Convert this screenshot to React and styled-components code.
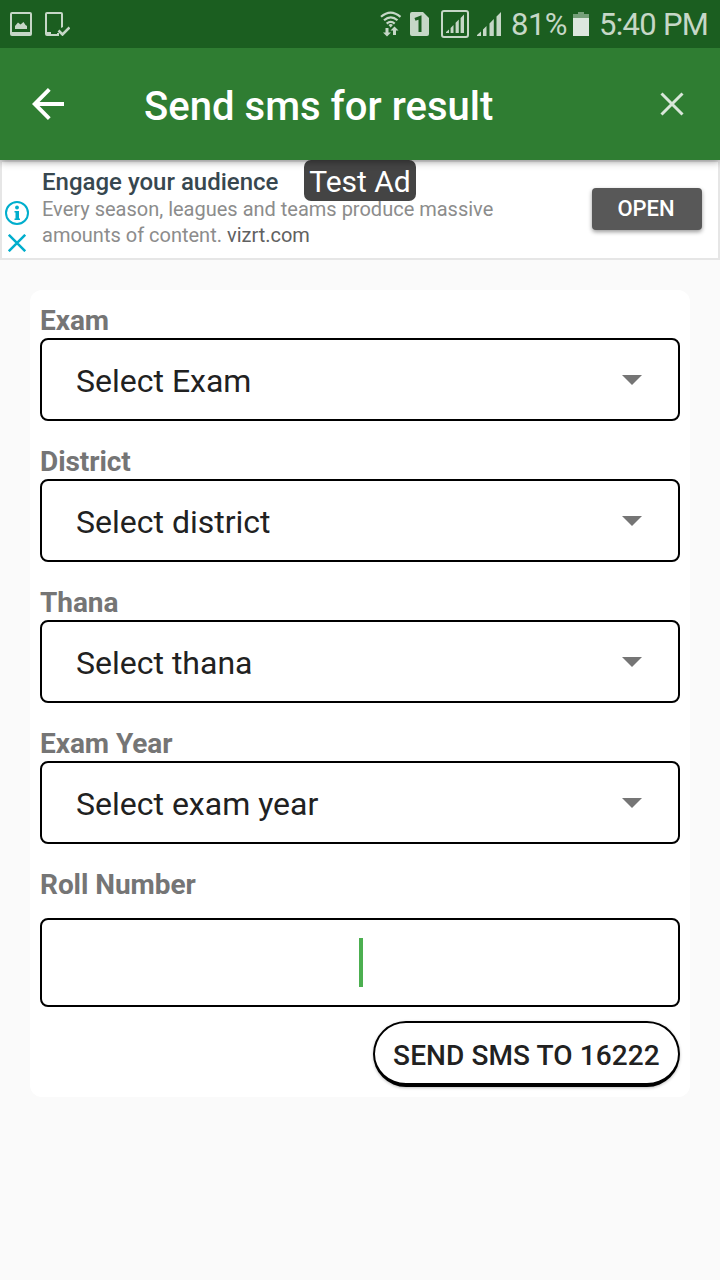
import React from 'react';
import styled, { createGlobalStyle } from 'styled-components';

const GlobalStyle = createGlobalStyle`
  *, *::before, *::after { box-sizing: border-box; }
  body { margin: 0; background: #fafafa; font-family: Roboto, sans-serif; }
  svg { display: block; flex: none; }
  button { font-family: inherit; }
`;

const Screen = styled.div`
  width: 720px;
  height: 1280px;
  overflow: hidden;
  background: #fafafa;
`;

const StatusBar = styled.header`
  position: relative;
  z-index: 2;
  display: flex;
  justify-content: space-between;
  height: 48px;
  padding: 0 10px 0 9px;
  background: #1b5e20;
  color: #c6d7c7;
`;

const StatusGroup = styled.div`
  display: flex;
  align-items: center;
`;

const StatusText = styled.span`
  width: ${({ $width }) => $width}px;
  padding-top: 2px;
  font-size: 31px;
  line-height: 46px;
  letter-spacing: ${({ $spacing }) => $spacing || 0}px;
  white-space: nowrap;
`;

const Toolbar = styled.div`
  position: relative;
  z-index: 1;
  display: flex;
  align-items: center;
  height: 112px;
  padding: 0 32px;
  background: #2f7d32;
  box-shadow: 0 1px 8px rgba(0, 0, 0, 0.45);
  color: #fff;
`;

const Title = styled.h1`
  flex: 1;
  margin: 0 0 0 80px;
  padding-top: 6px;
  font-size: 40px;
  font-weight: 500;
  line-height: 48px;
  letter-spacing: 0.03px;
`;

const IconButton = styled.button`
  display: flex;
  justify-content: center;
  width: 32px;
  padding: 0;
  border: 0;
  background: none;
  color: inherit;
`;

const AdBanner = styled.section`
  position: relative;
  display: flex;
  height: 100px;
  border: 2px solid #e6e6e6;
  background: #fff;
`;

const AdControls = styled.div`
  display: flex;
  flex-direction: column;
  align-items: center;
  gap: 9px;
  width: 40px;
  padding: 39px 10px 0 0;
`;

const AdCopy = styled.div`
  flex: 1;
  padding-top: 6px;
`;

const AdTitle = styled.div`
  color: #37474f;
  font-size: 24px;
  font-weight: 500;
  line-height: 28px;
`;

const AdText = styled.p`
  width: 500px;
  margin: 0;
  color: #8c8c8c;
  font-size: 20px;
  line-height: 26px;
`;

const AdLink = styled.span`
  color: #616161;
`;

const AdAction = styled.button`
  width: 110px;
  height: 42px;
  margin: 26px 16px 0 0;
  padding: 0 2px 2px 0;
  border: 0;
  border-radius: 4px;
  background: #585858;
  box-shadow: 0 2px 4px rgba(0, 0, 0, 0.4);
  color: #fff;
  font-size: 22px;
  font-weight: 500;
`;

const AdBadge = styled.span`
  position: absolute;
  top: -2px;
  left: 302px;
  width: 112px;
  height: 41px;
  border-radius: 7px;
  background: #444;
  color: #fff;
  font-size: 30px;
  line-height: 44px;
  text-align: center;
`;

const FormCard = styled.form`
  display: flex;
  flex-direction: column;
  margin: 30px 30px 0;
  padding: 10px;
  border-radius: 12px;
  background: #fff;
`;

const Field = styled.div`
  margin-bottom: ${({ $gap }) => $gap}px;
`;

const Label = styled.div`
  height: 38px;
  margin-bottom: ${({ $gap }) => $gap || 0}px;
  padding-top: 2px;
  color: #757575;
  font-size: 28px;
  font-weight: 700;
  line-height: 38px;
  letter-spacing: -0.06px;
`;

const SelectBox = styled.div`
  display: flex;
  align-items: center;
  justify-content: space-between;
  height: 83px;
  padding: 0 36px 0 34px;
  border: 2px solid #000;
  border-radius: 8px;
  color: #212121;
  font-size: 32px;
  line-height: 40px;
`;

const SelectValue = styled.span`
  padding-top: 3px;
`;

const RollInput = styled.div`
  display: flex;
  align-items: center;
  justify-content: center;
  height: 89px;
  padding-left: 2px;
  border: 2px solid #000;
  border-radius: 8px;
`;

const Caret = styled.span`
  width: 4px;
  height: 49px;
  background: #4caf50;
`;

const SendButton = styled.button`
  align-self: flex-end;
  width: 307px;
  height: 66px;
  padding: 4px 0 0;
  border: 2px solid #000;
  border-bottom-width: 4px;
  border-radius: 33px;
  background: #fff;
  box-shadow: 0 1px 3px rgba(0, 0, 0, 0.25);
  color: #212121;
  font-size: 28px;
  font-weight: 500;
  letter-spacing: 0.1px;
  white-space: nowrap;
`;

const IconSlot = styled.span`
  margin-right: ${({ $after }) => $after}px;
`;

const PictureIcon = () => (
  <svg width="24" height="24" viewBox="0 0 24 24">
    <path fill="currentColor" fillRule="evenodd" d="M3 0h18a2 2 0 0 1 2 2v20a2 2 0 0 1-2 2H3a2 2 0 0 1-2-2V2a2 2 0 0 1 2-2zm0 2v18h18V2z" />
    <path fill="currentColor" d="M6 17v-3l3-3.500 2.500 2 3-2.500 2 3 1.500 1v3z" />
  </svg>
);

const DeviceCheckIcon = () => (
  <svg width="25" height="24" viewBox="0 0 25 24">
    <path fill="currentColor" fillRule="evenodd" d="M2 0h14a2 2 0 0 1 2 2v13l-2 1V2H2v18h4v2h6v-1h2v3H2a2 2 0 0 1-2-2V2a2 2 0 0 1 2-2z" />
    <path fill="none" stroke="currentColor" strokeWidth="2.600" d="M13.500 18.500l4 4 7-7" />
  </svg>
);

const WifiIcon = () => (
  <svg width="22" height="26" viewBox="0 0 22 26">
    <g fill="none" stroke="currentColor" strokeWidth="2.200">
      <path d="M1 5.800q9.500-8.400 19.500 0" />
      <path d="M4 9.300q6.800-6 13.500 0" />
      <path d="M6.700 12.600q4-3.600 8 0" />
    </g>
    <path fill="currentColor" d="M8.500 14q2.200-1.800 4.400 0l-2.200 2.400zM5.500 17h3v4.500H11L7 25.500l-4-4h2.500zM13 24h3v-4.500h2.500l-4-4-4 4H13z" />
  </svg>
);

const SimIcon = () => (
  <svg width="19" height="24" viewBox="0 0 19 24">
    <path fill="currentColor" d="M2 0h11l6 6v16a2 2 0 0 1-2 2H2a2 2 0 0 1-2-2V2a2 2 0 0 1 2-2z" />
    <path fill="none" stroke="#1b5e20" strokeWidth="3" d="M5 7.300l5-1.800V20" />
  </svg>
);

const SignalIcon = () => (
  <svg width="24" height="24" viewBox="0 0 24 24">
    <path fill="currentColor" d="M0 24v-1l4-3.500V24zM6 24v-6.500L9.500 14v10zM12.500 24V11.500L16.800 7v17zM19.500 24V4.500L24 0v24z" />
  </svg>
);

const BoxedSignalIcon = () => (
  <svg width="28" height="28" viewBox="0 0 28 28">
    <rect x="1" y="1" width="26" height="26" rx="2" fill="none" stroke="currentColor" strokeWidth="2" />
    <path fill="currentColor" d="M5 23v-1l3-2.500V23zM9.600 23v-5l2.900-3v8zM14.600 23V12.700L17.800 9.500V23zM19.600 23V8L23 4.500V23z" />
  </svg>
);

const BatteryIcon = () => (
  <svg width="16" height="24" viewBox="0 0 16 24">
    <path fill="#76a079" d="M5 0h6v2h5v4H0V2h5z" />
    <path fill="#dde7de" d="M0 6h16v18H0z" />
  </svg>
);

const BackIcon = () => (
  <svg width="32" height="32" viewBox="0 0 32 32">
    <path fill="none" stroke="currentColor" strokeWidth="3.900" d="M32 16H3M17.300 1.400L2.700 16l14.600 14.600" />
  </svg>
);

const CloseIcon = () => (
  <svg width="24" height="24" viewBox="0 0 24 24">
    <path fill="none" stroke="#d9e7da" strokeWidth="3" d="M1.500 1.500l21 21m0-21l-21 21" />
  </svg>
);

const InfoIcon = () => (
  <svg width="24" height="24" viewBox="0 0 24 24">
    <circle cx="12" cy="12" r="11" fill="none" stroke="#00aecd" strokeWidth="2" />
    <circle cx="12" cy="6.500" r="1.900" fill="#00aecd" />
    <path fill="#00aecd" d="M9.500 10H14v7.500h1V19H9.500v-1.500h1v-6h-1z" />
  </svg>
);

const DismissIcon = () => (
  <svg width="18" height="18" viewBox="0 0 18 18">
    <path fill="none" stroke="#00aecd" strokeWidth="2.500" d="M.8.8l16.400 16.400m0-16.400L.8 17.200" />
  </svg>
);

const DropdownIcon = () => (
  <svg width="20" height="10" viewBox="0 0 20 10">
    <path fill="#757575" d="M0 0h20L10 10z" />
  </svg>
);

const SELECTS = [
  { label: 'Exam', value: 'Select Exam' },
  { label: 'District', value: 'Select district' },
  { label: 'Thana', value: 'Select thana' },
  { label: 'Exam Year', value: 'Select exam year' },
];

export default function App() {
  return (
    <Screen>
      <GlobalStyle />
      <StatusBar>
        <StatusGroup>
          <IconSlot $after={12}><PictureIcon /></IconSlot>
          <DeviceCheckIcon />
        </StatusGroup>
        <StatusGroup>
          <IconSlot $after={8}><WifiIcon /></IconSlot>
          <IconSlot $after={12}><SimIcon /></IconSlot>
          <IconSlot $after={8}><BoxedSignalIcon /></IconSlot>
          <IconSlot $after={10}><SignalIcon /></IconSlot>
          <StatusText $width={62} $spacing={-0.5}>81%</StatusText>
          <IconSlot $after={10}><BatteryIcon /></IconSlot>
          <StatusText $width={111} $spacing={-0.7}>5:40 PM</StatusText>
        </StatusGroup>
      </StatusBar>
      <Toolbar>
        <IconButton type="button" aria-label="Back"><BackIcon /></IconButton>
        <Title>Send sms for result</Title>
        <IconButton type="button" aria-label="Close"><CloseIcon /></IconButton>
      </Toolbar>
      <AdBanner>
        <AdControls>
          <InfoIcon />
          <DismissIcon />
        </AdControls>
        <AdCopy>
          <AdTitle>Engage your audience</AdTitle>
          <AdText>
            Every season, leagues and teams produce massive
            <br />
            amounts of content. <AdLink>vizrt.com</AdLink>
          </AdText>
        </AdCopy>
        <AdAction type="button">OPEN</AdAction>
        <AdBadge>Test Ad</AdBadge>
      </AdBanner>
      <FormCard>
        {SELECTS.map(({ label, value }) => (
          <Field key={label} $gap={20}>
            <Label>{label}</Label>
            <SelectBox>
              <SelectValue>{value}</SelectValue>
              <DropdownIcon />
            </SelectBox>
          </Field>
        ))}
        <Field $gap={14}>
          <Label $gap={16}>Roll Number</Label>
          <RollInput><Caret /></RollInput>
        </Field>
        <SendButton type="button">SEND SMS TO 16222</SendButton>
      </FormCard>
    </Screen>
  );
}
